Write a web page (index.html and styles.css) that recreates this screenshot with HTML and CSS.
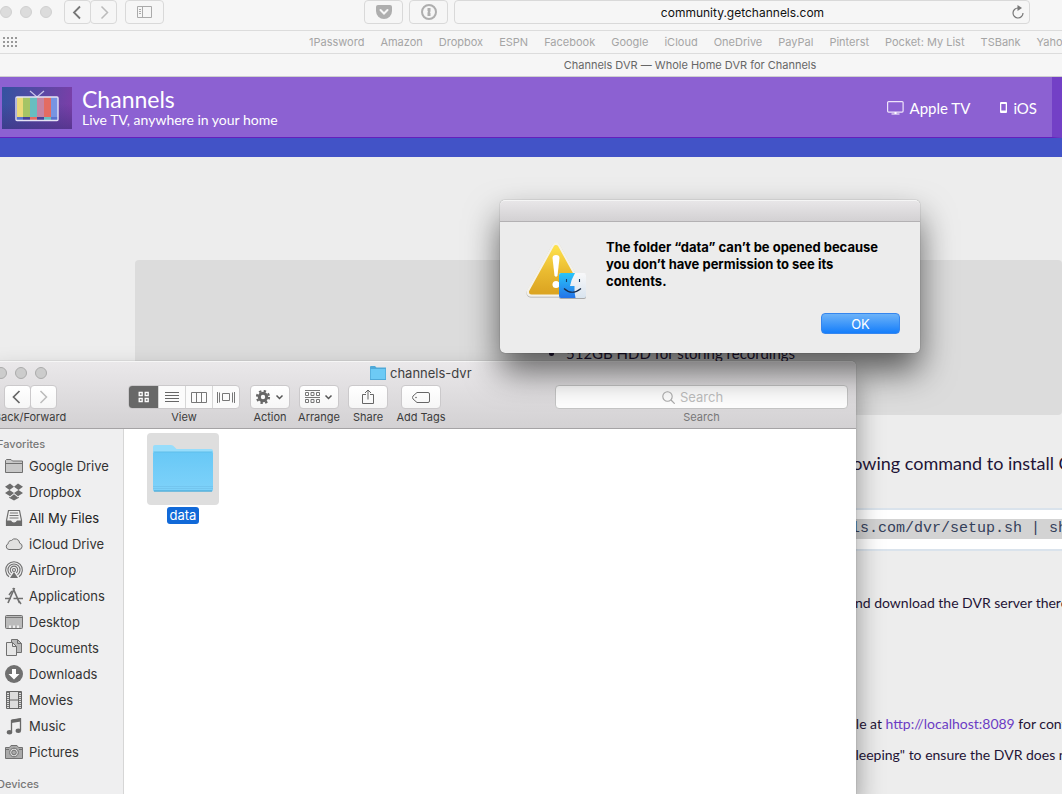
FILE: index.html
```html
<!DOCTYPE html>
<html lang="en">
<head>
    <meta charset="UTF-8">
    <meta name="viewport" content="width=device-width, initial-scale=1.0">
    <title>Channels DVR — Whole Home DVR for Channels</title>
    <link rel="stylesheet" href="styles.css">
</head>
<body>
    <!-- Browser -->
    <div class="browser-bar">
        <div class="lights"><span></span><span></span><span></span></div>
        <div class="btn-pair">
            <button class="bar-btn small" aria-label="Back"><svg width="26" height="22" viewBox="0 0 26 22"><path d="M15 5.500L9 11.500L15 17.500" fill="none" stroke="#777" stroke-width="1.800"/></svg></button>
            <button class="bar-btn small" aria-label="Forward"><svg width="26" height="22" viewBox="0 0 26 22"><path d="M10.500 5.500L16.500 11.500L10.500 17.500" fill="none" stroke="#bbb" stroke-width="1.500"/></svg></button>
        </div>
        <button class="bar-btn" aria-label="Sidebar"><svg width="16" height="12" viewBox="0 0 16 12"><path d="M.5.5h14v11h-14zM5.500.5v11" fill="none" stroke="#aaa"/><path d="M2 3.500h2M2 5.500h2M2 7.500h2" stroke="#aaa"/></svg></button>
        <button class="bar-btn pocket" aria-label="Pocket"><svg width="16" height="14" viewBox="0 0 16 14"><path d="M2 0h12q2 0 2 2v4a8 8 0 0 1-16 0V2Q0 0 2 0z" fill="#aeaeae"/><path d="M4.500 5L8 8.500L11.500 5" fill="none" stroke="#f6f6f6" stroke-width="2" stroke-linecap="round"/></svg></button>
        <button class="bar-btn" aria-label="1Password"><svg width="16" height="16" viewBox="0 0 16 16"><circle cx="8" cy="8" r="7" fill="none" stroke="#aeaeae" stroke-width="2"/><path d="M6.500 4h3v3.500l-.7.700.7.700V12h-3V8.500l.7-.7-.7-.7z" fill="#aeaeae"/></svg></button>
        <div class="url-box">
            <input class="url" type="text" value="community.getchannels.com" aria-label="Address">
            <button class="reload" aria-label="Reload"><svg width="12" height="14" viewBox="0 0 12 14"><path d="M6 3a5 5 0 1 0 5 5" fill="none" stroke="#777" stroke-width="1.200"/><path d="M5.500 0L10 3L5.500 6z" fill="#777"/></svg></button>
        </div>
    </div>
    <nav class="bookmarks">
        <svg class="dots" width="15" height="11" viewBox="0 0 15 11"><path d="M0 1h15M0 5h15M0 9h15" stroke="#999" stroke-width="2" stroke-dasharray="2 2"/></svg>
        <a href="#">1Password</a>
        <a href="#">Amazon</a>
        <a href="#">Dropbox</a>
        <a href="#">ESPN</a>
        <a href="#">Facebook</a>
        <a href="#">Google</a>
        <a href="#">iCloud</a>
        <a href="#">OneDrive</a>
        <a href="#">PayPal</a>
        <a href="#">Pinterst</a>
        <a href="#">Pocket: My List</a>
        <a href="#">TSBank</a>
        <a href="#">Yahoo</a>
    </nav>
    <div class="tab-title">Channels DVR — Whole Home DVR for Channels</div>

    <!-- Site -->
    <header class="site-header">
        <svg class="logo" width="70" height="42" viewBox="0 0 70 42">
            <defs><linearGradient id="logoBg" x1="0" y1="0.300" x2="1" y2="0.400"><stop offset="0" stop-color="#3552a0"/><stop offset="1" stop-color="#7a3fa8"/></linearGradient>
            <linearGradient id="logoDim" x1="0" y1="0" x2="0" y2="1"><stop offset=".4" stop-color="#403080" stop-opacity="0"/><stop offset="1" stop-color="#403080" stop-opacity=".6"/></linearGradient></defs>
            <rect width="70" height="42" fill="url(#logoBg)"/><rect width="70" height="42" fill="url(#logoDim)"/>
            <path d="M28 4l7 6 7-6" fill="none" stroke="#c9c4ea" stroke-width="1.200"/>
            <path d="M15 10h7v20h-7z" fill="#ecd978"/><path d="M21 10h7v20h-7z" fill="#a5c465"/><path d="M28 10h7v20h-7z" fill="#67bdc0"/><path d="M35 10h7v20h-7z" fill="#c584a4"/><path d="M42 10h7v20h-7z" fill="#e36c62"/><path d="M49 10h7v20h-7z" fill="#7794e2"/>
            <path d="M15 30h6v3h-6zM49 30h7v3h-7z" fill="#5773cf"/><path d="M21 30h7v3h-7zM35 30h7v3h-7z" fill="#47419a"/><path d="M28 30h7v3h-7z" fill="#e36c62"/><path d="M42 30h7v3h-7z" fill="#67bdc0"/>
            <rect x="14" y="10" width="42" height="23.500" rx="1" fill="none" stroke="#e6e3f5" stroke-width="1.400"/>
        </svg>
        <div class="brand">
            <h1>Channels</h1>
            <p>Live TV, anywhere in your home</p>
        </div>
        <nav class="site-nav">
            <a href="#"><svg width="17" height="14" viewBox="0 0 17 14"><rect x=".6" y=".6" width="15.500" height="10.500" rx="1" fill="none" stroke="#eee4fa" stroke-width="1.200"/><path d="M7.500 11h2v1.500h3v1h-8v-1h3z" fill="#fff"/></svg>Apple TV</a>
            <a class="ios" href="#"><svg width="7" height="11" viewBox="0 0 7 11"><rect width="7" height="11" rx="1" fill="#fff"/><rect x="1.300" y="2" width="4.400" height="6.500" fill="#8d61d2"/></svg>iOS</a>
        </nav>
    </header>
    <div class="strip"></div>
    <main class="page">
        <div class="spec-box">
            <ul>
                <li>512GB HDD for storing recordings</li>
            </ul>
        </div>
        <p class="article lead">lowing command to install Channels DVR</p>
        <pre class="code"><code>ls.com/dvr/setup.sh | sh</code></pre>
        <p class="article">and download the DVR server there.</p>
        <p class="article status">ble at <a href="#">http://localhost:8089</a> for configuration</p>
        <p class="article">Sleeping" to ensure the DVR does not</p>
    </main>

    <!-- Finder window -->
    <section class="finder">
        <div class="finder-top">
            <div class="finder-title">
                <div class="lights"><span></span><span></span><span></span></div>
                <svg width="16" height="14" viewBox="0 0 16 14"><path d="M0 1q0-1 1-1h4l1.500 1.500H16V14H0z" fill="#4fa9d8"/><path d="M.7 3h14.600v10H.7z" fill="#6dcaf5"/></svg>
                channels-dvr
            </div>
            <div class="tools">
                <div class="tool nav-tool">
                    <div class="btn-pair">
                        <button class="tool-btn small" aria-label="Back"><svg width="12" height="14" viewBox="0 0 12 14"><path d="M7.500 1L1.500 7l6 6" fill="none" stroke="#666" stroke-width="1.700"/></svg></button>
                        <button class="tool-btn small" aria-label="Forward"><svg width="12" height="14" viewBox="0 0 12 14"><path d="M2.500 1l6 6-6 6" fill="none" stroke="#bbb" stroke-width="1.500"/></svg></button>
                    </div>
                    <span>Back/Forward</span>
                </div>
                <div class="tool view-tool">
                    <div class="segments">
                        <button class="active" aria-label="Icons"><svg width="12" height="12" viewBox="0 0 12 12"><path d="M1.200 1.500h3v3h-3zM7.200 1.500h3v3h-3zM1.200 7.500h3v3h-3zM7.200 7.500h3v3h-3z" fill="none" stroke="#fff" stroke-width="1.300"/></svg></button>
                        <button aria-label="List"><svg width="14" height="12" viewBox="0 0 14 12"><path d="M0 1.500h14M0 4.500h14M0 7.500h14M0 10.500h14" stroke="#666"/></svg></button>
                        <button aria-label="Columns"><svg width="16" height="11" viewBox="0 0 16 11"><path d="M.5.5h15v10H.5zM5.500.5v10M10.500.5v10" fill="none" stroke="#777"/></svg></button>
                        <button aria-label="Cover flow"><svg width="18" height="11" viewBox="0 0 18 11"><path d="M.5 0v11M2.500.5v10M15.500.5v10M17.500 0v11M5.500 1.500h7v7h-7z" fill="none" stroke="#777"/></svg></button>
                    </div>
                    <span>View</span>
                </div>
                <div class="tool">
                    <button class="tool-btn" aria-label="Action"><svg width="28" height="14" viewBox="0 0 28 14"><circle cx="7" cy="7" r="3.700" fill="none" stroke="#666" stroke-width="3"/><circle cx="7" cy="7" r="6" fill="none" stroke="#666" stroke-width="2.200" stroke-dasharray="2.350 2.360"/><path d="M20.500 5.500l3 3 3-3" fill="none" stroke="#555" stroke-width="1.500"/></svg></button>
                    <span>Action</span>
                </div>
                <div class="tool">
                    <button class="tool-btn" aria-label="Arrange"><svg width="28" height="14" viewBox="0 0 28 14"><path d="M0 .5h15M0 7.500h15M.5 2.500h3v3h-3zM6 2.500h3v3H6zM11.500 2.500h3v3h-3zM.5 9.500h3v3h-3zM6 9.500h3v3H6zM11.500 9.500h3v3h-3z" fill="none" stroke="#777"/><path d="M20.500 5.500l3 3 3-3" fill="none" stroke="#555" stroke-width="1.500"/></svg></button>
                    <span>Arrange</span>
                </div>
                <div class="tool">
                    <button class="tool-btn" aria-label="Share"><svg width="12" height="16" viewBox="0 0 12 16"><path d="M4 5.500H.5v9h11v-9H8M6 10.500V1M3 4l3-3 3 3" fill="none" stroke="#666"/></svg></button>
                    <span>Share</span>
                </div>
                <div class="tool tags-tool">
                    <button class="tool-btn" aria-label="Add Tags"><svg width="18" height="11" viewBox="0 0 18 11"><path d="M5 .5h11q1.500 0 1.500 1.500v7q0 1.500-1.500 1.500H5L1 7q-1-1.500 0-3z" fill="none" stroke="#666"/><circle cx="4" cy="5.500" r=".8" fill="#666"/></svg></button>
                    <span>Add Tags</span>
                </div>
                <div class="tool search-tool">
                    <div class="search-box">
                        <svg width="13" height="13" viewBox="0 0 13 13"><circle cx="5.500" cy="5.500" r="4.700" fill="none" stroke="#aaa" stroke-width="1.100"/><path d="M9 9l3.700 3.700" stroke="#aaa" stroke-width="1.200"/></svg>
                        <input id="search" type="search" placeholder="Search">
                    </div>
                    <label for="search">Search</label>
                </div>
            </div>
        </div>
        <div class="finder-body">
            <aside class="sidebar">
                <h2>Favorites</h2>
                <ul>
                    <li><svg viewBox="0 0 18 18"><path d="M.5 15.500v-12l1-1H6L7.500 4h10v11.500z" fill="#c8c8c8" stroke="#707070"/><path d="M.5 6.500h17" stroke="#707070"/></svg>Google Drive</li>
                    <li><svg viewBox="0 0 18 18"><path d="M5 .5l4 3.200-4.500 3.300L0 3.800zM13 .5L9 3.700l4.500 3.300L18 3.800zM4.500 7L9 10l-4 3.200-5-3.200zM13.500 7L9 10l4 3.200 5-3.200zM4 13.800l1 .6 4-3.200 4 3.200 1-.6v1L9 17.500l-5-2.700z" fill="#6c6c6c"/></svg>Dropbox</li>
                    <li class="strong"><svg viewBox="0 0 18 18"><path d="M3.500 1.500h11l2 10v5h-15v-5z" fill="#eee" stroke="#6c6c6c" stroke-width="1.200"/><path d="M5 4h8M4.500 6.500h9M4.500 9h9" stroke="#777"/><path d="M1.500 11.500H6q1 2 3 2t3-2h4.500v5h-15z" fill="#6c6c6c"/></svg>All My Files</li>
                    <li><svg viewBox="0 0 18 18"><path d="M4 14.500h10a3.200 3.200 0 0 0 .7-6.300 4.700 4.700 0 0 0-8.300-2.700 3 3 0 0 0-3.200 3.200A3 3 0 0 0 4 14.500z" fill="#e0e0e0" stroke="#707070"/></svg>iCloud Drive</li>
                    <li><svg viewBox="0 0 18 18"><g fill="none" stroke="#707070" stroke-width="1.100"><path d="M4 15.700a8.300 8.300 0 1 1 10 0M5.500 13.800a6 6 0 1 1 7 0M6.800 11.800a3.700 3.700 0 1 1 4.400 0"/><circle cx="9" cy="9" r="1.500"/></g><path d="M9 11l-4 6h8z" fill="#707070"/></svg>AirDrop</li>
                    <li><svg viewBox="0 0 18 18"><path d="M9.500 1L3 16M8 1l6.500 15M0 11.500h6M8.500 11.500H18" fill="none" stroke="#707070" stroke-width="1.700"/><path d="M7 4l-3 4M14 14l2 3" stroke="#707070" stroke-width="1.500"/></svg>Applications</li>
                    <li><svg viewBox="0 0 18 18"><rect x=".5" y="2.500" width="17" height="13" rx="1" fill="#bbb" stroke="#707070"/><path d="M1 4.500h16" stroke="#777"/><path d="M4 12.500h10v2.500H4z" fill="#eee"/><path d="M7 12.500V15M11 12.500V15" stroke="#777"/></svg>Desktop</li>
                    <li><svg viewBox="0 0 18 18"><path d="M6.500.5h6l4 4v9h-10z" fill="#bbb" stroke="#707070"/><path d="M1.500 3.500h6l4 4v9h-10z" fill="#e6e6e6" stroke="#707070"/><path d="M7.500 3.500v4h4M12.500.5v4h4" fill="none" stroke="#707070"/></svg>Documents</li>
                    <li><svg viewBox="0 0 18 18"><circle cx="9" cy="9" r="9" fill="#707070"/><path d="M7 4h4v5h3.500L9 14.500 3.500 9H7z" fill="#fff"/></svg>Downloads</li>
                    <li><svg viewBox="0 0 18 18"><path d="M1.500.5h15v17h-15z" fill="#ddd" stroke="#666"/><path d="M3 1v16M15 1v16" stroke="#777" stroke-width="2" stroke-dasharray="1 1"/><path d="M4.500 1v16M13.500 1v16M5 9h8" stroke="#666"/></svg>Movies</li>
                    <li><svg viewBox="0 0 18 18"><path d="M6.500 15V3.500L15.500 2v11.500" fill="none" stroke="#686868" stroke-width="1.300"/><path d="M6.500 2.500L16 1v3.500L6.500 6z" fill="#686868"/><ellipse cx="4.500" cy="15.300" rx="2.700" ry="2.200" fill="#686868"/><ellipse cx="13.300" cy="13.800" rx="2.700" ry="2.200" fill="#686868"/></svg>Music</li>
                    <li><svg viewBox="0 0 18 18"><path d="M.5 4.500h4l1.500-2h6l1.500 2h4v11H.5z" fill="#aaa" stroke="#707070"/><circle cx="9" cy="9.500" r="4.300" fill="#ddd" stroke="#707070"/><circle cx="9" cy="9.500" r="2.300" fill="#aaa" stroke="#707070"/><path d="M1 6.500h3M14 6.500h3" stroke="#707070"/></svg>Pictures</li>
                </ul>
                <h2>Devices</h2>
            </aside>
            <div class="files">
                <figure class="file">
                    <div class="thumb">
                        <svg width="62" height="50" viewBox="0 0 62 50">
                            <defs><linearGradient id="folder" x1="0" y1="0" x2="0" y2="1"><stop offset="0" stop-color="#68c8f6"/><stop offset="1" stop-color="#7ed2fa"/></linearGradient></defs>
                            <path d="M1 3q0-2 2-2h16q2 0 3 1.500L24.500 5H59q2 0 2 2v10H1z" fill="#97ddfb"/>
                            <path d="M1 9.500Q1 8 3 8h56q2 0 2 1.500V46q0 1.500-2 1.500H3Q1 47.500 1 46z" fill="url(#folder)"/>
                            <path d="M1.500 8h59" stroke="#5fbde9"/><path d="M1 42.500h60M1 44.500h60" stroke="#6cbbe4" stroke-width=".5"/><path d="M2 47h58" stroke="#3f9fcc"/>
                        </svg>
                    </div>
                    <figcaption>data</figcaption>
                </figure>
            </div>
        </div>
    </section>

    <!-- Alert -->
    <div class="alert" role="alertdialog" aria-labelledby="alert-text">
        <div class="alert-bar"></div>
        <div class="alert-body">
            <svg class="alert-icon" width="62" height="60" viewBox="0 0 62 60">
                <defs>
                    <linearGradient id="warn" x1="0" y1="0" x2="0" y2="1"><stop offset="0" stop-color="#fde04b"/><stop offset=".5" stop-color="#ebbd32"/><stop offset="1" stop-color="#dca522"/></linearGradient>
                    <linearGradient id="blueFace" x1="0" y1="0" x2="0" y2="1"><stop offset="0" stop-color="#29c5fa"/><stop offset="1" stop-color="#2474e8"/></linearGradient>
                    <linearGradient id="whiteFace" x1="0" y1="0" x2="0" y2="1"><stop offset="0" stop-color="#f8f8f9"/><stop offset="1" stop-color="#d9e4ef"/></linearGradient>
                </defs>
                <path d="M5 54L30 8.500 55 54z" fill="#aaa" stroke="#aaa" stroke-width="9" stroke-linejoin="round"/>
                <path d="M5 53.200L30 8l25 45.200z" fill="#f3f1ea" stroke="#f3f1ea" stroke-width="9" stroke-linejoin="round"/>
                <path d="M5.500 53L30 8.500 54.500 53z" fill="url(#warn)" stroke="url(#warn)" stroke-width="5" stroke-linejoin="round"/>
                <path d="M26.500 19q0-3 3.500-3t3.500 3l-2 17.500q-1.500 2.500-3 0z" fill="#fff"/>
                <circle cx="30" cy="45.500" r="3.500" fill="#fff"/>
                <rect x="33" y="35" width="27" height="25" rx="2" fill="#aaa"/>
                <rect x="33" y="34" width="27" height="25" rx="2" fill="url(#whiteFace)"/>
                <path d="M35 34h14q-4 7-5 13h4.500q-.5 6 1 12H35q-2 0-2-2V36q0-2 2-2z" fill="url(#blueFace)"/>
                <path d="M40.500 40v3M53.500 40v3" stroke="#163c66" stroke-width="1.100"/>
                <path d="M38 49.500q8 7.500 17 0" fill="none" stroke="#172a48" stroke-width="1.200"/>
            </svg>
            <div class="alert-main">
                <p id="alert-text">The folder “data” can’t be opened because you don’t have permission to see its contents.</p>
                <button class="ok-btn">OK</button>
            </div>
        </div>
    </div>
</body>
</html>
```
FILE: styles.css
```css
* {
    box-sizing: border-box;
}

body {
    position: relative;
    margin: 0;
    height: 100vh;
    overflow: hidden;
    background-color: #ededed;
    font-family: 'Inter', 'Liberation Sans', sans-serif;
}

h1, h2, p, ul, figure, pre {
    margin: 0;
    padding: 0;
}

button, input {
    font-family: inherit;
}

button {
    display: flex;
    align-items: center;
    justify-content: center;
    padding: 0;
}

svg {
    flex: none;
}

a {
    text-decoration: none;
}

/* Browser */
.browser-bar {
    display: flex;
    align-items: flex-start;
    height: 31px;
    background-color: #f6f6f6;
    border-bottom: 1px solid #dcdcdc;
}

.lights {
    display: flex;
    gap: 8px;
}

.lights span {
    width: 12px;
    height: 12px;
    border-radius: 50%;
    background-color: #dcdcdc;
    border: 1px solid #d0d0d0;
}

.browser-bar .lights {
    padding-top: 6px;
    margin-right: 12px;
}

.btn-pair {
    display: flex;
}

.bar-btn {
    width: 39px;
    height: 24px;
    margin-right: 6px;
    background-color: #f6f6f6;
    border: 1px solid #d9d9d9;
    border-radius: 4px;
}

.btn-pair .bar-btn {
    width: 27px;
    margin-right: -1px;
}

.browser-bar .btn-pair {
    margin-right: 9px;
}

.pocket {
    margin-left: 194px;
}

.url-box {
    display: flex;
    align-items: center;
    flex: 1;
    height: 24px;
    margin-right: 32px;
    padding-right: 5px;
    border: 1px solid #d9d9d9;
    border-radius: 4px;
}

.url {
    flex: 1;
    min-width: 0;
    padding: 0 0 0 18px;
    border: 0;
    background: none;
    font-size: 12px;
    text-align: center;
    color: #111;
}

.reload {
    border: 0;
    background: none;
}

.bookmarks {
    display: flex;
    align-items: center;
    gap: 16px;
    height: 23px;
    background-color: #f6f6f6;
    border-bottom: 1px solid #dcdcdc;
    overflow: hidden;
    white-space: nowrap;
    font-size: 11px;
}

.bookmarks a {
    color: #a5a5a5;
}

.dots {
    margin-left: 3px;
    margin-right: 275px;
}

.tab-title {
    height: 23px;
    padding-left: 318px;
    background-color: #f6f6f6;
    border-bottom: 1px solid #cfcfcf;
    font-size: 11px;
    line-height: 22px;
    text-align: center;
    color: #666;
}

/* Site */
.site-header {
    display: flex;
    align-items: center;
    height: 61px;
    padding-top: 1px;
    padding-left: 2px;
    background-color: #8c61d2;
    border-right: 10px solid #7340c6;
    border-bottom: 1px solid #651fbd;
    font-family: 'Lato', sans-serif;
    color: #fff;
}

.brand {
    flex: 1;
    padding-left: 10px;
}

.brand h1 {
    font-size: 23px;
    line-height: 25px;
    font-weight: 400;
}

.brand p {
    font-size: 14px;
    line-height: 16px;
}

.site-nav {
    display: flex;
    gap: 30px;
    padding-right: 15px;
    font-size: 15px;
}

.site-nav a {
    display: flex;
    align-items: center;
    gap: 6px;
    color: #fff;
}

.strip {
    height: 19px;
    background-color: #4253c7;
}

.page {
    padding-top: 103px;
    font-family: 'Lato', sans-serif;
    font-size: 14px;
    line-height: 20px;
    color: #1f1436;
    white-space: nowrap;
}

.spec-box {
    height: 155px;
    margin-left: 135px;
    padding: 83px 0 0 431px;
    border-radius: 4px;
    background-color: #dcdcdc;
    font-size: 15px;
}

.article {
    margin-top: 11px;
    padding-left: 848px;
}

.article a {
    color: #6b3cc4;
}

.lead {
    margin: 38px 0 35px;
    font-size: 18px;
}

.code {
    margin-bottom: 42px;
    padding: 9px 0 10px 851px;
    background-color: #fff;
    border-top: 2px solid #dae3ec;
    border-bottom: 2px solid #dae3ec;
}

.code code {
    display: block;
    background-color: #d3d3d3;
    font-family: 'Liberation Mono', monospace;
    font-size: 15px;
    line-height: 20px;
    color: #34405a;
}

.status {
    margin-top: 101px;
}

/* Finder window */
.finder {
    position: absolute;
    top: 361px;
    bottom: 0;
    left: -8px;
    display: flex;
    flex-direction: column;
    width: 864px;
    border-radius: 5px 5px 0 0;
    background-color: #fff;
    box-shadow: 0 0 1px rgba(0, 0, 0, 0.5), 0 16px 28px rgba(0, 0, 0, 0.4);
    overflow: visible;
}

.finder-top {
    height: 68px;
    border-radius: 5px 5px 0 0;
    border-top: 1px solid #f6f6f6;
    border-bottom: 1px solid #a5a3a5;
    background: linear-gradient(#eae8ea, #d3d1d3);
}

.finder-title {
    display: flex;
    align-items: center;
    gap: 4px;
    height: 21px;
    padding-left: 3px;
    font-size: 13px;
    color: #3f3f3f;
}

.finder-title .lights {
    margin-right: 319px;
}

.finder-title .lights span {
    background-color: #ccc;
    border-color: #ababab;
}

.tools {
    display: flex;
    gap: 9px;
    padding-top: 2px;
    padding-right: 8px;
}

.tool {
    display: flex;
    flex-direction: column;
    align-items: center;
    width: 40px;
    font-size: 11px;
    line-height: 16px;
    color: #3c3c3c;
    white-space: nowrap;
}

.tool-btn {
    width: 40px;
    height: 24px;
    border: 1px solid #cbc9cb;
    border-radius: 4px;
    background: linear-gradient(#fff, #f6f6f6);
}

.tool-btn.small {
    width: 27px;
    margin-right: -1px;
}

.nav-tool {
    width: 76px;
    margin-right: 51px;
}

.view-tool {
    width: 112px;
    margin-right: 1px;
}

.segments {
    display: flex;
    width: 112px;
    height: 24px;
    border: 1px solid #cbc9cb;
    border-radius: 4px;
    background-color: #fbfbfb;
    overflow: hidden;
}

.segments button {
    flex: 1;
    border: 0;
    border-left: 1px solid #d6d6d6;
    background: none;
}

.segments .active {
    flex: none;
    width: 29px;
    border: 0;
    background-color: #686868;
}

.tags-tool {
    width: 48px;
}

.search-tool {
    width: 293px;
    margin-left: auto;
    color: #777;
}

.search-box {
    display: flex;
    align-items: center;
    gap: 5px;
    width: 100%;
    height: 24px;
    padding-left: 106px;
    border: 1px solid #c4c4c4;
    border-radius: 4px;
    background-color: #fdfdfd;
}

.search-box input {
    flex: 1;
    min-width: 0;
    padding: 0;
    border: 0;
    background: none;
    font-size: 13px;
}

.search-box input::placeholder {
    color: #bdbdbd;
}

.finder-body {
    display: flex;
    flex: 1;
    min-height: 0;
}

.sidebar {
    width: 132px;
    padding-left: 5px;
    border-right: 1px solid #d6d6d6;
    background-color: #efeff0;
    overflow: hidden;
}

.sidebar h2 {
    padding: 7px 0 1px;
    font-size: 11px;
    line-height: 16px;
    font-weight: 500;
    color: #777;
}

.sidebar ul {
    padding-left: 8px;
    list-style: none;
}

.sidebar li {
    display: flex;
    align-items: center;
    gap: 6px;
    height: 26px;
    font-size: 13px;
    color: #333;
    white-space: nowrap;
}

.sidebar li svg {
    width: 18px;
    height: 18px;
}

.sidebar .strong {
    color: #222;
}

.sidebar ul + h2 {
    padding-top: 11px;
}

.files {
    flex: 1;
    padding: 4px 0 0 23px;
}

.file {
    display: flex;
    flex-direction: column;
    align-items: center;
    gap: 2px;
    width: 72px;
}

.thumb {
    display: flex;
    align-items: center;
    justify-content: center;
    width: 72px;
    height: 72px;
    border-radius: 4px;
    background-color: #dedede;
}

.file figcaption {
    padding: 0 3px;
    border-radius: 3px;
    background-color: #1169d8;
    font-size: 13px;
    line-height: 17px;
    color: #fff;
}

/* Alert */
.alert {
    position: absolute;
    top: 200px;
    left: 500px;
    width: 420px;
    border-radius: 5px;
    background-color: #ececec;
    box-shadow: 0 0 1px rgba(0, 0, 0, 0.6), 0 18px 34px rgba(0, 0, 0, 0.6);
    overflow: visible;
}

.alert-bar {
    height: 22px;
    border-top: 1px solid #f5f5f5;
    border-bottom: 1px solid #b3b1b3;
    border-radius: 5px 5px 0 0;
    background: linear-gradient(#e8e6e8, #d3d1d3);
}

.alert-body {
    display: flex;
    gap: 18px;
    padding: 17px 20px 19px 26px;
}

.alert-main {
    flex: 1;
}

.alert-main p {
    width: 284px;
    font-size: 13px;
    line-height: 17px;
    font-weight: 700;
    color: #000;
}

.ok-btn {
    width: 79px;
    height: 21px;
    margin: 23px 0 0 auto;
    border: 1px solid #3586ee;
    border-radius: 4px;
    background: linear-gradient(#6db3f8, #157efb);
    font-size: 13px;
    color: #fff;
}
```
